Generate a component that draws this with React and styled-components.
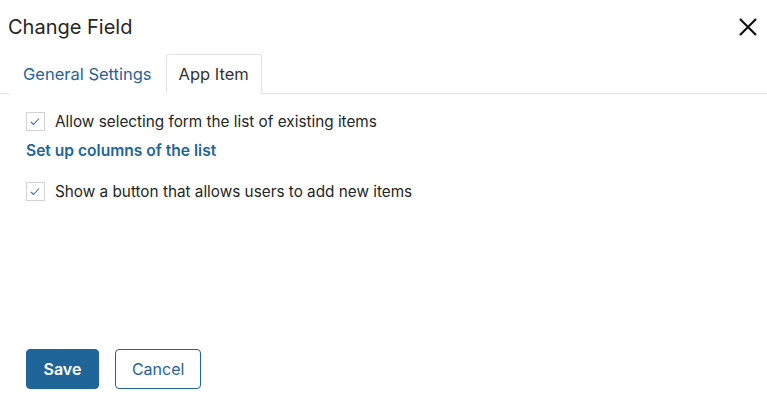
import React, { useState } from 'react';
import styled, { createGlobalStyle } from 'styled-components';

const GlobalStyle = createGlobalStyle`
  html, body {
    margin: 0;
    padding: 0;
    background: #fff;
    font-family: Inter, "Noto Sans", sans-serif;
    color: #262626;
  }
`;

const Dialog = styled.div`
  width: 767px;
  height: 405px;
  display: flex;
  flex-direction: column;
  box-sizing: border-box;
`;

const Header = styled.div`
  display: flex;
  align-items: center;
  justify-content: space-between;
  padding: 12px 8px 0 8px;
  height: 42px;
  box-sizing: border-box;
`;

const Title = styled.h2`
  margin: 0;
  font-size: 20px;
  font-weight: 400;
  color: #262626;
`;

const CloseButton = styled.button`
  border: none;
  background: none;
  padding: 0;
  width: 22px;
  height: 22px;
  display: flex;
  align-items: center;
  justify-content: center;
  cursor: pointer;
`;

const Tabs = styled.div`
  display: flex;
  align-items: flex-end;
  margin-top: 11px;
  padding-left: 9px;
  border-bottom: 1px solid #e3e3e3;
  height: 40px;
`;

const Tab = styled.button`
  height: 40px;
  padding: 0 ${p => (p.$active ? '12px' : '13px')};
  margin-bottom: -1px;
  font-family: inherit;
  font-size: 16.5px;
  background: #fff;
  cursor: pointer;
  border: 1px solid ${p => (p.$active ? '#e3e3e3' : 'transparent')};
  border-bottom-color: ${p => (p.$active ? '#fff' : 'transparent')};
  border-radius: 3px 3px 0 0;
  color: ${p => (p.$active ? '#333' : '#1f6598')};
`;

const Body = styled.div`
  flex: 1;
  padding: 17px 26px 0 26px;
  display: flex;
  flex-direction: column;
`;

const CheckRow = styled.label`
  display: flex;
  align-items: center;
  gap: 10px;
  font-size: 15.3px;
  color: #262626;
  height: 20px;
  cursor: pointer;
`;

const Box = styled.span`
  width: 19px;
  height: 19px;
  border: 1px solid #d3d3d3;
  box-sizing: border-box;
  display: flex;
  align-items: center;
  justify-content: center;
  background: #fff;
`;

const LinkText = styled.a`
  font-size: 15.6px;
  font-weight: 600;
  color: #1f6598;
  text-decoration: none;
  margin: 10px 0 20px 0;
  line-height: 20px;
  cursor: pointer;
`;

const Footer = styled.div`
  display: flex;
  gap: 16px;
  padding: 0 26px 16px 26px;
`;

const Button = styled.button`
  height: 40px;
  padding: 0 ${p => (p.$primary ? '16.5px' : '16px')};
  border-radius: 4px;
  font-family: inherit;
  font-size: 16px;
  font-weight: ${p => (p.$primary ? 600 : 400)};
  cursor: pointer;
  border: 1px solid #1f6598;
  background: ${p => (p.$primary ? '#1f6598' : '#fff')};
  color: ${p => (p.$primary ? '#fff' : '#1f6598')};
`;

const Check = () => (
  <svg width="17" height="17" viewBox="0 0 17 17">
    <path d="M4 9 L6.5 11.5 L12 5.5" fill="none" stroke="#3a6db5" strokeWidth="1.1" />
  </svg>
);

const Checkbox = ({ checked, onChange, children }) => (
  <CheckRow onClick={onChange}>
    <Box>{checked && <Check />}</Box>
    {children}
  </CheckRow>
);

export default function App() {
  const [tab, setTab] = useState('app');
  const [allowSelect, setAllowSelect] = useState(true);
  const [showButton, setShowButton] = useState(true);

  return (
    <Dialog>
      <GlobalStyle />
      <Header>
        <Title>Change Field</Title>
        <CloseButton aria-label="Close">
          <svg width="20" height="20" viewBox="0 0 20 20">
            <path d="M2 2 L18 18 M18 2 L2 18" stroke="#111" strokeWidth="2.2" />
          </svg>
        </CloseButton>
      </Header>
      <Tabs>
        <Tab $active={tab === 'general'} onClick={() => setTab('general')}>General Settings</Tab>
        <Tab $active={tab === 'app'} onClick={() => setTab('app')}>App Item</Tab>
      </Tabs>
      <Body>
        <Checkbox checked={allowSelect} onChange={() => setAllowSelect(!allowSelect)}>
          Allow selecting form the list of existing items
        </Checkbox>
        <LinkText>Set up columns of the list</LinkText>
        <Checkbox checked={showButton} onChange={() => setShowButton(!showButton)}>
          Show a button that allows users to add new items
        </Checkbox>
      </Body>
      <Footer>
        <Button $primary>Save</Button>
        <Button>Cancel</Button>
      </Footer>
    </Dialog>
  );
}
